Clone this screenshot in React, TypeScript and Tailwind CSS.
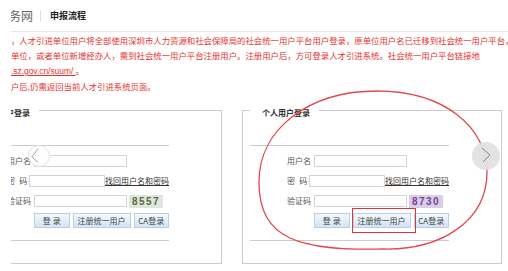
import React from "react"

const labelCls = "flex w-[25px] justify-between text-[8px] leading-none text-[#555]"
const inputCls = "h-[12px] w-[93px] border border-[#d4d4d4] bg-white"
const btnCls =
  "flex h-[15px] items-center justify-center border border-[#bcd0e4] bg-gradient-to-b from-[#f4f8fd] to-[#d3e4f4] text-[8px] leading-none text-[#444]"

function Panel({
  title,
  code,
  codeCls,
  highlight,
}: {
  title: string
  code: string
  codeCls: string
  highlight?: boolean
}) {
  return (
    <fieldset className="h-[163px] w-[260px] shrink-0 border border-[#cdcdcd] bg-white">
      <legend className="ml-[7px] pl-[12px] pr-[9px] pt-[6px] text-[8px] font-bold leading-[12px] text-[#333]">
        {title}
      </legend>
      <div className="ml-[7px] mt-[26px] w-[199px] border-y border-[#cdcdcd] pb-[12px] pt-[5px]">
        <div className="flex h-[20px] items-center pl-[37px]">
          <div className={labelCls}>
            <span>用户名</span>
          </div>
          <div className={`ml-[2px] ${inputCls}`} />
        </div>
        <div className="flex h-[20px] items-center pl-[37px]">
          <div className={labelCls}>
            <span>密</span>
            <span>码</span>
          </div>
          <div className={`ml-[2px] ${inputCls}`} />
          <span className="whitespace-nowrap text-[8px] leading-none text-[#333] underline">
            找回用户名和密码
          </span>
        </div>
        <div className="flex h-[20px] items-center pl-[37px]">
          <div className={labelCls}>
            <span>验证码</span>
          </div>
          <div className={`ml-[2px] ${inputCls}`} />
          <div
            className={`ml-[2px] flex h-[13px] w-[34px] items-center justify-center font-['Liberation_Sans',sans-serif] text-[10px] font-bold tracking-[1.5px] ${codeCls}`}
          >
            {code}
          </div>
        </div>
        <div className="mt-[2px] flex gap-[3px] pl-[64px]">
          <div className={`w-[45px] ${btnCls}`}>登 录</div>
          <div className="relative">
            <div className={`w-[58px] ${btnCls}`}>注册统一用户</div>
            {highlight && (
              <span className="absolute -bottom-[5px] -left-[1px] -right-[5px] -top-[5px] border-[1.5px] border-[#e0363a]" />
            )}
          </div>
          <div className={`w-[45px] ${btnCls}`}>CA登录</div>
        </div>
      </div>
    </fieldset>
  )
}

export default function App() {
  return (
    <div className="relative flex h-[271px] w-[508px] overflow-hidden bg-white font-['Noto_Sans_CJK_SC','Noto_Sans',sans-serif]">
      <div className="w-[11px] shrink-0" />
      <div className="min-w-0 flex-1 overflow-hidden">
        <div className="flex h-[32px] items-center border-b border-[#e8e8e8]">
          <span className="ml-[-14px] whitespace-nowrap text-[12px] leading-none text-[#666]">服务网</span>
          <span className="ml-[7px] h-[10px] w-px bg-[#dcdcdc]" />
          <span className="ml-[9px] text-[9px] font-bold leading-none text-[#222]">申报流程</span>
        </div>
        <div className="whitespace-nowrap pt-[1px] text-[8.4px] leading-[15px] text-[#e3332f]">
          <div>，人才引进单位用户将全部使用深圳市人力资源和社会保障局的社会统一用户平台用户登录，原单位用户名已迁移到社会统一用户平台，可以</div>
          <div>单位，或者单位新增经办人，需到社会统一用户平台注册用户。注册用户后，方可登录人才引进系统。社会统一用户平台链接地</div>
          <div>
            <span className="font-['Liberation_Sans',sans-serif] underline">.sz.gov.cn/suum/ </span>。
          </div>
          <div>户后,仍需返回当前人才引进系统页面。</div>
        </div>
        <div className="ml-[-49px] mt-[7px] flex gap-[20px]">
          <Panel title="单位用户登录" code="8557" codeCls="bg-[#dfe6dc] text-[#5a6a3a]" />
          <Panel title="个人用户登录" code="8730" codeCls="bg-[#dccbea] text-[#6b4a8e]" highlight />
        </div>
      </div>

      <svg className="pointer-events-none absolute left-0 top-0" width="508" height="271">
        <path
          d="M377,91 C445,91 487,128 487,172 C487,222 440,250 384,249 C300,251 259,240 259,182 C259,128 310,91 377,91 Z"
          fill="none"
          stroke="#e4474b"
          strokeWidth="1.3"
        />
      </svg>

      <div className="absolute left-[28px] top-[145px] flex h-[22px] w-[22px] items-center justify-center rounded-full border border-[#e2e2e2] bg-white/90">
        <svg width="22" height="22" viewBox="0 0 22 22">
          <path d="M10,3 L3,12 L10,18" fill="none" stroke="#9a9a9a" strokeWidth="1" />
        </svg>
      </div>
      <div className="absolute left-[472px] top-[142px] flex h-[28px] w-[28px] items-center justify-center rounded-full bg-[#e2e2e2]/95">
        <svg width="28" height="28" viewBox="0 0 28 28">
          <path d="M10,6 L18,13 L11,20" fill="none" stroke="#8a8a8a" strokeWidth="1" />
        </svg>
      </div>
    </div>
  )
}
